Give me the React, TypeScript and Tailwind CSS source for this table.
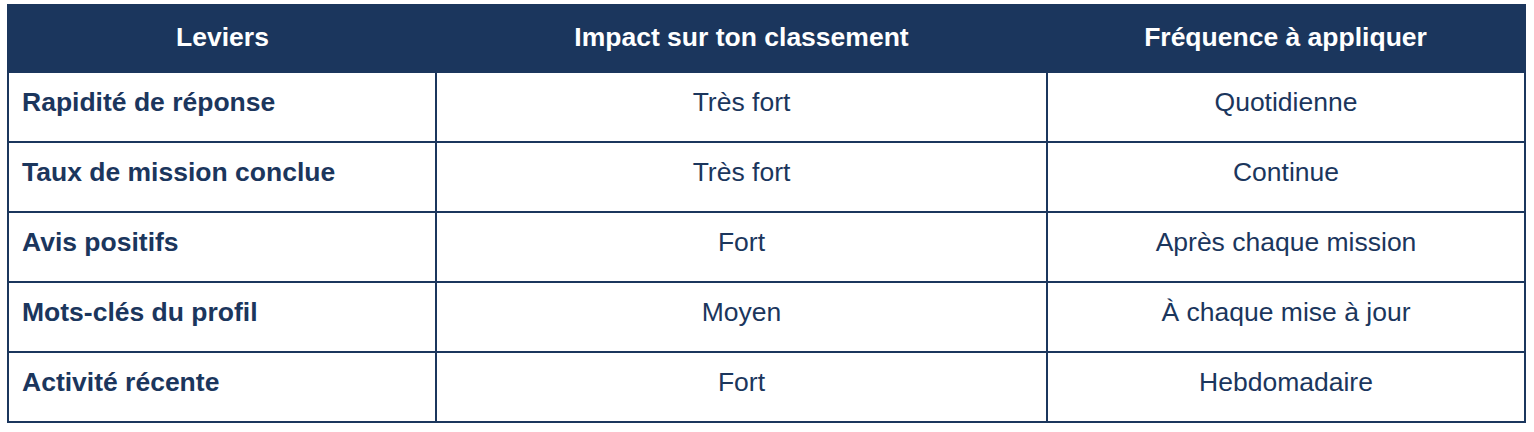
const rows = [
  { lever: 'Rapidité de réponse', impact: 'Très fort', freq: 'Quotidienne' },
  { lever: 'Taux de mission conclue', impact: 'Très fort', freq: 'Continue' },
  { lever: 'Avis positifs', impact: 'Fort', freq: 'Après chaque mission' },
  { lever: 'Mots-clés du profil', impact: 'Moyen', freq: 'À chaque mise à jour' },
  { lever: 'Activité récente', impact: 'Fort', freq: 'Hebdomadaire' },
]

export default function App() {
  return (
    <div className="min-h-screen bg-white pl-[7px] pt-[4px] font-['Liberation_Sans',Arial,sans-serif] text-[#1b365d]">
      <table className="w-[1517px] table-fixed border-collapse border-2 border-[#1b365d] text-[26.5px] leading-[32px]">
        <colgroup>
          <col className="w-[428px]" />
          <col className="w-[611px]" />
          <col className="w-[478px]" />
        </colgroup>
        <thead>
          <tr className="h-[67px] bg-[#1b365d] text-white">
            <th className="pb-[4px] font-bold">Leviers</th>
            <th className="pb-[4px] font-bold">Impact sur ton classement</th>
            <th className="pb-[4px] font-bold">Fréquence à appliquer</th>
          </tr>
        </thead>
        <tbody>
          {rows.map((row) => (
            <tr key={row.lever} className="h-[70px]">
              <td className="border-2 border-[#1b365d] px-[13px] pt-[13px] pb-[23px] align-top font-bold">
                {row.lever}
              </td>
              <td className="border-2 border-[#1b365d] pt-[13px] pb-[23px] align-top text-center">
                {row.impact}
              </td>
              <td className="border-2 border-[#1b365d] pt-[13px] pb-[23px] align-top text-center">
                {row.freq}
              </td>
            </tr>
          ))}
        </tbody>
      </table>
    </div>
  )
}
